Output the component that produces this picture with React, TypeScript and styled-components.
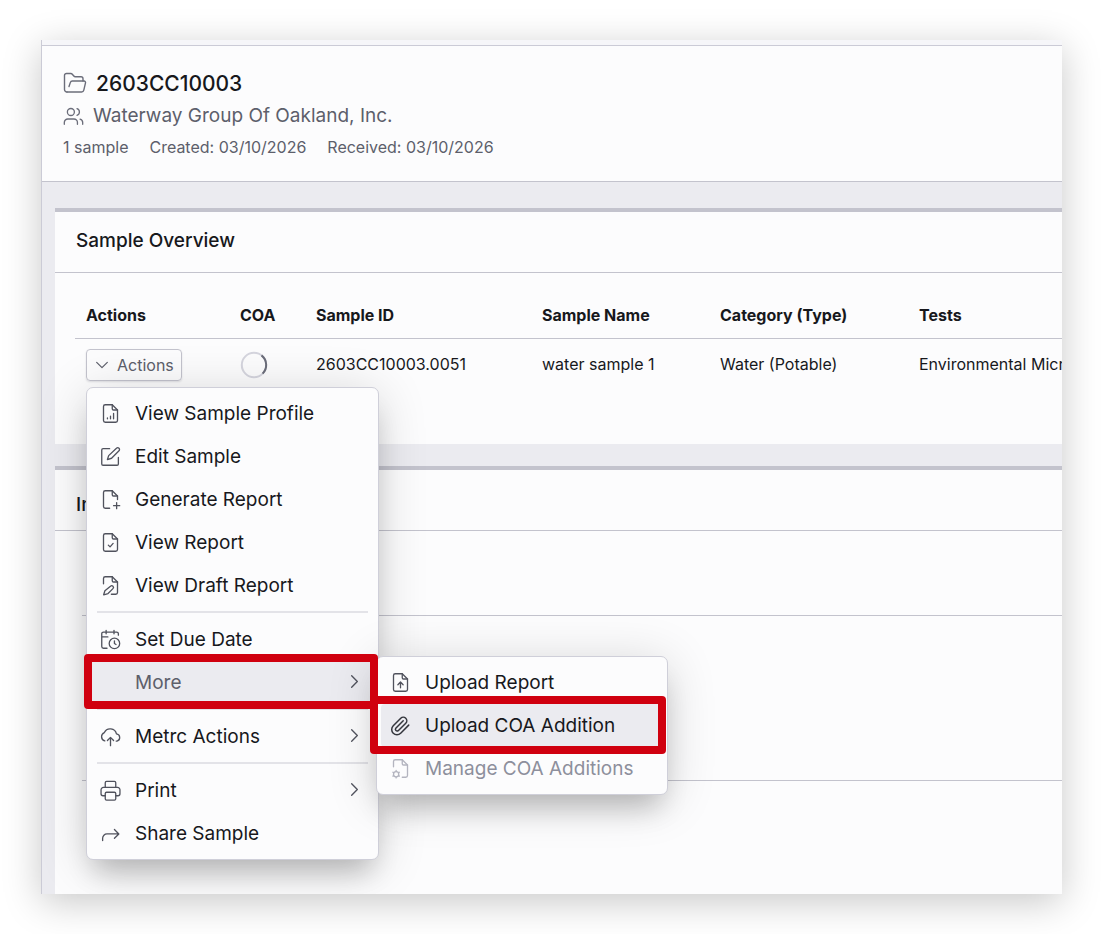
import React from "react";
import styled, { createGlobalStyle, css } from "styled-components";

const Global = createGlobalStyle`
  * { box-sizing: border-box; }
  body { margin: 0; background: #ffffff; font-family: Inter, "Liberation Sans", sans-serif; color: #17181c; }
  button { font: inherit; color: inherit; background: none; border: 0; padding: 0; text-align: left; cursor: pointer; }
  h1, h2, p, ul { margin: 0; padding: 0; }
`;

const Page = styled.div`
  min-height: 100vh;
  display: flex;
  padding: 40px 40px 40px 41px;
`;

const Frame = styled.main`
  flex: 1;
  min-width: 0;
  display: flex;
  flex-direction: column;
  overflow: hidden;
  border-left: 1px solid #cbcbd6;
  background: #ebebf0;
`;

const Shadow = styled.div`
  flex: 1;
  min-width: 0;
  display: flex;
  box-shadow: 0 8px 36px rgba(0, 0, 0, 0.22);
`;

const TopStrip = styled.div`
  height: 6px;
  flex: none;
  background: #f6f6f9;
  border-bottom: 1px solid #cbcbd6;
`;

const Header = styled.header`
  flex: none;
  display: flex;
  flex-direction: column;
  padding: 21px 21px 18px;
  background: #fcfcfd;
  border-bottom: 1px solid #c3c3cd;
`;

const TitleRow = styled.div`
  display: flex;
  align-items: center;
  gap: 9px;
  height: 32px;
  color: #6b6d7a;
`;

const Title = styled.h1`
  font-size: 21px;
  font-weight: 500;
  color: #17181c;
`;

const Client = styled.p`
  font-size: 19px;
  color: #5d5f6b;
`;

const Facts = styled.p`
  display: flex;
  align-items: center;
  gap: 21px;
  height: 32px;
  font-size: 16px;
  color: #5d5f6b;
`;

const Body = styled.div`
  flex: 1;
  display: flex;
  flex-direction: column;
  gap: 22px;
  padding: 26px 0 0 13px;
`;

const Card = styled.section<{ $fill?: boolean }>`
  flex: ${(p) => (p.$fill ? "1 0 auto" : "none")};
  background: #fcfcfd;
  border-top: 4px solid #c3c3cd;
`;

const CardTitle = styled.h2<{ $low?: boolean }>`
  display: flex;
  align-items: center;
  height: 61px;
  padding: ${(p) => (p.$low ? "8px 21px 0" : "0 21px 4px")};
  border-bottom: 1px solid #c3c3cd;
  font-size: 19px;
  font-weight: 500;
`;

const TableWrap = styled.div`
  padding: 20px 0 53px 20px;
`;

const Table = styled.table`
  width: 100%;
  border-collapse: separate;
  border-spacing: 0;
  table-layout: fixed;
  font-size: 16px;
`;

const Th = styled.th<{ $w?: number }>`
  width: ${(p) => (p.$w ? `${p.$w}px` : "auto")};
  height: 46px;
  padding: 0 11px 2px;
  text-align: left;
  font-weight: 700;
  white-space: nowrap;
  border-bottom: 1px solid #c3c3cd;
`;

const Td = styled.td<{ $text?: boolean }>`
  height: 52px;
  padding: ${(p) => (p.$text ? "0 11px 3px" : "0 11px")};
  white-space: nowrap;
`;

const Anchor = styled.div`
  position: relative;
  display: flex;
`;

const ActionsButton = styled.button`
  display: flex;
  align-items: center;
  gap: 7px;
  height: 32px;
  padding: 0 7px;
  border: 1px solid #c3c3cd;
  border-radius: 4px;
  font-size: 16px;
  color: #5d5f6b;
  box-shadow: 0 1px 2px rgba(20, 20, 40, 0.12);
`;

const panel = css`
  position: absolute;
  padding: 4px;
  list-style: none;
  background: #fcfcfd;
  border: 1px solid #cfcfd9;
  border-radius: 7px;
  box-shadow: 0 20px 26px -8px rgba(0, 0, 0, 0.2), 0 6px 50px rgba(0, 0, 0, 0.16);
`;

const Menu = styled.ul`
  ${panel}
  z-index: 5;
  top: calc(100% + 6px);
  left: 0;
  width: 293px;
`;

const SubMenu = styled.ul`
  ${panel}
  top: -5px;
  left: calc(100% + 2px);
  width: 292px;
`;

const Entry = styled.li`
  position: relative;
`;

const Item = styled.button<{ $active?: boolean; $muted?: boolean }>`
  display: flex;
  align-items: center;
  width: 100%;
  height: 43px;
  padding: 0 11px 0 9px;
  gap: 14px;
  border-radius: 4px;
  font-size: 19px;
  color: ${(p) => (p.$muted ? "#5d5f6b" : "#17181c")};
  background: ${(p) => (p.$active ? "#ebebf0" : "transparent")};
  &:disabled { color: #8d8f9c; }
`;

const Label = styled.span`
  flex: 1;
  white-space: nowrap;
`;

const IconSlot = styled.span<{ $dim?: boolean; $dark?: boolean }>`
  display: flex;
  width: 21px;
  color: ${(p) => (p.$dim ? "#b3b4bf" : p.$dark ? "#33353c" : "#50525d")};
`;

const MoreMark = styled.span`
  display: flex;
  padding-bottom: 2px;
  color: #50525d;
`;

const Rule = styled.li`
  height: 11px;
  padding: 4px 6px 5px;
  &::after { content: ""; display: block; height: 2px; background: #e3e3e8; }
`;

const Callout = styled.div<{ $inner?: boolean }>`
  position: absolute;
  z-index: ${(p) => (p.$inner ? 3 : 2)};
  inset: ${(p) => (p.$inner ? "-8px -3px -7px -11px" : "-7px -4px -5px -7px")};
  border: 8px solid #d0000f;
  border-radius: 4px;
  pointer-events: none;
`;

const Section = styled.div`
  margin-left: 27px;
  height: 165px;
  border-bottom: 1px solid #c3c3cd;
  &:first-of-type { height: 85px; }
`;

const Block = styled.div`
  display: flex;
`;

const Svg = ({ size = 21, sw = 1.5, children }: { size?: number; sw?: number; children: React.ReactNode }) => (
  <svg width={size} height={size} viewBox="0 0 24 24" fill="none" stroke="currentColor" strokeWidth={sw} strokeLinecap="round" strokeLinejoin="round" aria-hidden="true">
    {children}
  </svg>
);

const FOLD = <path d="M14 2v4.500a1.500 1.500 0 0 0 1.500 1.500H20" />;
const PAGE = <path d="M14 2H6a2 2 0 0 0-2 2v16a2 2 0 0 0 2 2h12a2 2 0 0 0 2-2V8z" />;

const icons = {
  folder: (
    <Svg size={24} sw={1.4}>
      <path d="M4 21a2.500 2.500 0 0 1-2.500-2.500V4.500a2 2 0 0 1 2-2h4.300a2 2 0 0 1 1.500.700l1.500 1.800a2 2 0 0 0 1.500.700H18a2 2 0 0 1 2 2V10" />
      <path d="M6 15.500l1.300-3.900A2.200 2.200 0 0 1 9.400 10H21a1.500 1.500 0 0 1 1.500 1.900l-1.700 7.300A2.300 2.300 0 0 1 18.500 21H4" />
    </Svg>
  ),
  users: (
    <Svg>
      <circle cx="9" cy="8" r="4" />
      <path d="M1.500 22v-2a4 4 0 0 1 4-4h7a4 4 0 0 1 4 4v2" />
      <path d="M16 4.200a4 4 0 0 1 0 7.600" />
      <path d="M22.500 22v-2a4 4 0 0 0-3-3.850" />
    </Svg>
  ),
  chart: <Svg>{PAGE}{FOLD}<path d="M8.500 18v-1M12 18v-3M15.500 18v-6" /></Svg>,
  edit: (
    <Svg>
      <path d="M11 3H3.500A1.500 1.500 0 0 0 2 4.500v16A1.500 1.500 0 0 0 3.500 22h16a1.500 1.500 0 0 0 1.500-1.500V13" />
      <path d="M18.800 2.600a1.900 1.900 0 0 1 2.900 2.900l-8.500 8.500-4.700 1.500 1.400-4.500z" />
    </Svg>
  ),
  plus: <Svg><path d="M11 22H6a2 2 0 0 1-2-2V4a2 2 0 0 1 2-2h8l6 6v4" />{FOLD}<path d="M19 15.500v7M15.500 19h7" /></Svg>,
  check: <Svg>{PAGE}{FOLD}<path d="M9.500 15l2 2 3.500-4" /></Svg>,
  draft: (
    <Svg>
      <path d="M4 10V4a2 2 0 0 1 2-2h8l6 6v12a2 2 0 0 1-2 2h-5" />{FOLD}
      <path d="M12 12.800a1.900 1.900 0 0 1 2.800 2.800l-5.600 5.600-5 1.400 1.400-4.600z" />
    </Svg>
  ),
  calendar: (
    <Svg>
      <path d="M7 1.500v4M16 1.500v4M8 22H4a2 2 0 0 1-2-2V5.500a2 2 0 0 1 2-2h15a2 2 0 0 1 2 2V7M2 9h7" />
      <circle cx="16.500" cy="16.500" r="6" />
      <path d="M16.500 13.500v3l1.800 1.200" />
    </Svg>
  ),
  cloud: (
    <Svg>
      <path d="M5.500 17A5 5 0 0 1 5 7.500 7.300 7.300 0 0 1 18.800 9 4.200 4.200 0 0 1 19.500 17.200H18.500" />
      <path d="M12 22.500v-9M8.500 16.500l3.500-3.500 3.500 3.500" />
    </Svg>
  ),
  print: (
    <Svg>
      <path d="M6 8.500V3a1.500 1.500 0 0 1 1.500-1.500h9A1.500 1.500 0 0 1 18 3v5.500" />
      <path d="M6 18H3.500a2.300 2.300 0 0 1-2.300-2.300v-4.500a2.700 2.700 0 0 1 2.700-2.700h16.200a2.700 2.700 0 0 1 2.700 2.700v4.500a2.300 2.300 0 0 1-2.300 2.300H18" />
      <rect x="6" y="14" width="12" height="9" rx="1.500" />
    </Svg>
  ),
  share: <Svg><path d="M3 20v-2.500a5 5 0 0 1 5-5h13M16.500 7.500l5 5-5 5" /></Svg>,
  upload: <Svg>{PAGE}{FOLD}<path d="M12 18v-6M9 14.500l3-3 3 3" /></Svg>,
  clip: (
    <Svg sw={1.7}>
      <path d="M21.400 11.600l-9.200 9.200a6 6 0 0 1-8.500-8.500l8.600-8.600a4 4 0 0 1 5.700 5.700l-8.600 8.500a2 2 0 0 1-2.800-2.800l8.500-8.500" />
    </Svg>
  ),
  manage: (
    <Svg>
      <path d="M4 10V4a2 2 0 0 1 2-2h8l6 6v12a2 2 0 0 1-2 2h-4" />{FOLD}
      <circle cx="7" cy="18.500" r="3" />
      <path d="M7 14.200v1M7 21.800v1M3.300 16.300l.9.500M9.800 20.200l.9.500M3.300 20.700l.9-.5M9.800 16.800l.9-.5" />
    </Svg>
  ),
};

const Chevron = () => (
  <MoreMark>
    <Svg size={17} sw={1.9}><path d="M8 4l8 8-8 8" /></Svg>
  </MoreMark>
);

const Spinner = () => (
  <svg width="28" height="28" viewBox="0 0 28 28" fill="none" strokeWidth="2" role="img" aria-label="Loading">
    <circle cx="14" cy="14" r="12.200" stroke="#d5d5de" />
    <path d="M21.500 4.400A12.200 12.200 0 0 1 22.600 22.600" stroke="#6b6d7a" />
  </svg>
);

type IconName = keyof typeof icons;

const Action = ({ icon, text, more }: { icon: IconName; text: string; more?: boolean }) => (
  <Entry>
    <Item type="button">
      <IconSlot>{icons[icon]}</IconSlot>
      <Label>{text}</Label>
      {more && <Chevron />}
    </Item>
  </Entry>
);

export default function App() {
  return (
    <>
      <Global />
      <Page>
        <Shadow>
          <Frame>
            <TopStrip />
            <Header>
              <TitleRow>
                {icons.folder}
                <Title>2603CC10003</Title>
              </TitleRow>
              <TitleRow>
                {icons.users}
                <Client>Waterway Group Of Oakland, Inc.</Client>
              </TitleRow>
              <Facts>
                <span>1 sample</span>
                <span>Created: 03/10/2026</span>
                <span>Received: 03/10/2026</span>
              </Facts>
            </Header>
            <Body>
              <Card>
                <CardTitle>Sample Overview</CardTitle>
                <TableWrap>
                  <Table>
                    <thead>
                      <tr>
                        <Th $w={154}>Actions</Th>
                        <Th $w={76}>COA</Th>
                        <Th $w={226}>Sample ID</Th>
                        <Th $w={178}>Sample Name</Th>
                        <Th $w={199}>Category (Type)</Th>
                        <Th>Tests</Th>
                      </tr>
                    </thead>
                    <tbody>
                      <tr>
                        <Td>
                          <Anchor>
                            <ActionsButton type="button" aria-haspopup="menu" aria-expanded="true">
                              <Svg size={16} sw={1.8}><path d="M4 8l8 8 8-8" /></Svg>
                              Actions
                            </ActionsButton>
                            <Menu>
                              <Action icon="chart" text="View Sample Profile" />
                              <Action icon="edit" text="Edit Sample" />
                              <Action icon="plus" text="Generate Report" />
                              <Action icon="check" text="View Report" />
                              <Action icon="draft" text="View Draft Report" />
                              <Rule role="separator" />
                              <Action icon="calendar" text="Set Due Date" />
                              <Entry>
                                <Item type="button" $active $muted aria-expanded="true">
                                  <IconSlot />
                                  <Label>More</Label>
                                  <Chevron />
                                </Item>
                                <SubMenu>
                                  <Action icon="upload" text="Upload Report" />
                                  <Entry>
                                    <Item type="button" $active>
                                      <IconSlot $dark>{icons.clip}</IconSlot>
                                      <Label>Upload COA Addition</Label>
                                    </Item>
                                    <Callout $inner />
                                  </Entry>
                                  <Entry>
                                    <Item type="button" disabled>
                                      <IconSlot $dim>{icons.manage}</IconSlot>
                                      <Label>Manage COA Additions</Label>
                                    </Item>
                                  </Entry>
                                </SubMenu>
                                <Callout />
                              </Entry>
                              <Rule role="separator" />
                              <Action icon="cloud" text="Metrc Actions" more />
                              <Rule role="separator" />
                              <Action icon="print" text="Print" more />
                              <Action icon="share" text="Share Sample" />
                            </Menu>
                          </Anchor>
                        </Td>
                        <Td><Block><Spinner /></Block></Td>
                        <Td $text>2603CC10003.0051</Td>
                        <Td $text>water sample 1</Td>
                        <Td $text>Water (Potable)</Td>
                        <Td $text>Environmental Micro</Td>
                      </tr>
                    </tbody>
                  </Table>
                </TableWrap>
              </Card>
              <Card $fill>
                <CardTitle $low>In</CardTitle>
                <Section />
                <Section />
              </Card>
            </Body>
          </Frame>
        </Shadow>
      </Page>
    </>
  );
}
